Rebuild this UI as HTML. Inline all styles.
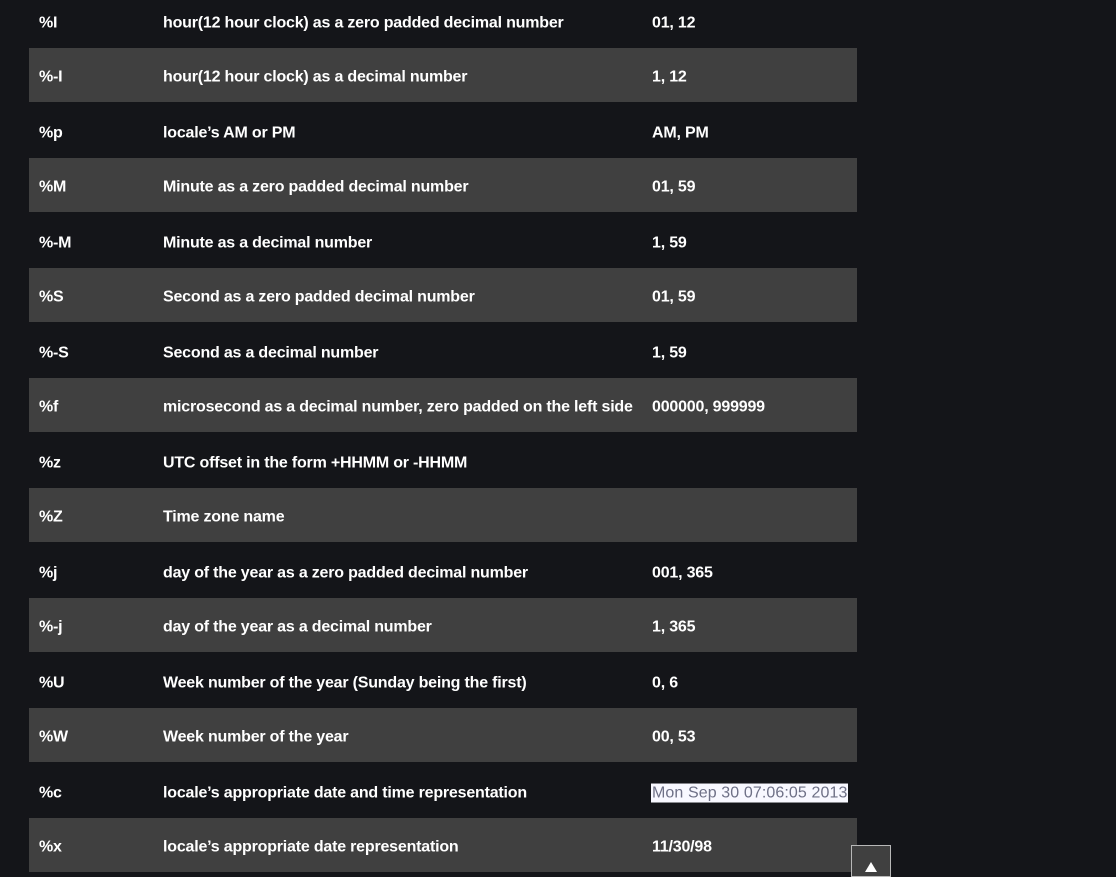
<!DOCTYPE html>
<html><head><meta charset="utf-8"><style>
html,body{margin:0;padding:0;background:#141519;width:1116px;height:870px;overflow:hidden}
body{font-family:"Liberation Sans",sans-serif;font-weight:bold;font-size:16px;color:#fff;letter-spacing:-0.2px}
.t{position:absolute;left:29px;top:-7px;width:828px}
.r{height:55px;position:relative}
.r.s{background:#404040;height:54px;margin-bottom:1px}
.r span{position:absolute;top:50%;transform:translateY(-36%);white-space:nowrap}
.a{left:10px}.b{left:134px}.c{left:623px}
.hl{background:#f8f8ff;color:#6e7086;font-weight:normal;padding:1px 1px;margin-left:-1px;letter-spacing:0.1px}
.btn{position:absolute;left:851px;top:845px;width:38px;height:30px;border:1px solid #b8b8b8;background:#404040}
.btn:after{content:"";position:absolute;left:13px;top:16px;border-left:6px solid transparent;border-right:6px solid transparent;border-bottom:10px solid #fff}
</style></head><body>
<div class="t">
<div class="r"><span class="a">%I</span><span class="b">hour(12 hour clock) as a zero padded decimal number</span><span class="c">01, 12</span></div>
<div class="r s"><span class="a">%-I</span><span class="b">hour(12 hour clock) as a decimal number</span><span class="c">1, 12</span></div>
<div class="r"><span class="a">%p</span><span class="b">locale’s AM or PM</span><span class="c">AM, PM</span></div>
<div class="r s"><span class="a">%M</span><span class="b">Minute as a zero padded decimal number</span><span class="c">01, 59</span></div>
<div class="r"><span class="a">%-M</span><span class="b">Minute as a decimal number</span><span class="c">1, 59</span></div>
<div class="r s"><span class="a">%S</span><span class="b">Second as a zero padded decimal number</span><span class="c">01, 59</span></div>
<div class="r"><span class="a">%-S</span><span class="b">Second as a decimal number</span><span class="c">1, 59</span></div>
<div class="r s"><span class="a">%f</span><span class="b">microsecond as a decimal number, zero padded on the left side</span><span class="c">000000, 999999</span></div>
<div class="r"><span class="a">%z</span><span class="b">UTC offset in the form +HHMM or -HHMM</span></div>
<div class="r s"><span class="a">%Z</span><span class="b">Time zone name</span></div>
<div class="r"><span class="a">%j</span><span class="b">day of the year as a zero padded decimal number</span><span class="c">001, 365</span></div>
<div class="r s"><span class="a">%-j</span><span class="b">day of the year as a decimal number</span><span class="c">1, 365</span></div>
<div class="r"><span class="a">%U</span><span class="b">Week number of the year (Sunday being the first)</span><span class="c">0, 6</span></div>
<div class="r s"><span class="a">%W</span><span class="b">Week number of the year</span><span class="c">00, 53</span></div>
<div class="r"><span class="a">%c</span><span class="b">locale’s appropriate date and time representation</span><span class="c"><span class="hl" style="position:static">Mon Sep 30 07:06:05 2013</span></span></div>
<div class="r s"><span class="a">%x</span><span class="b">locale’s appropriate date representation</span><span class="c">11/30/98</span></div>
</div>
<div class="btn"></div>
</body></html>
